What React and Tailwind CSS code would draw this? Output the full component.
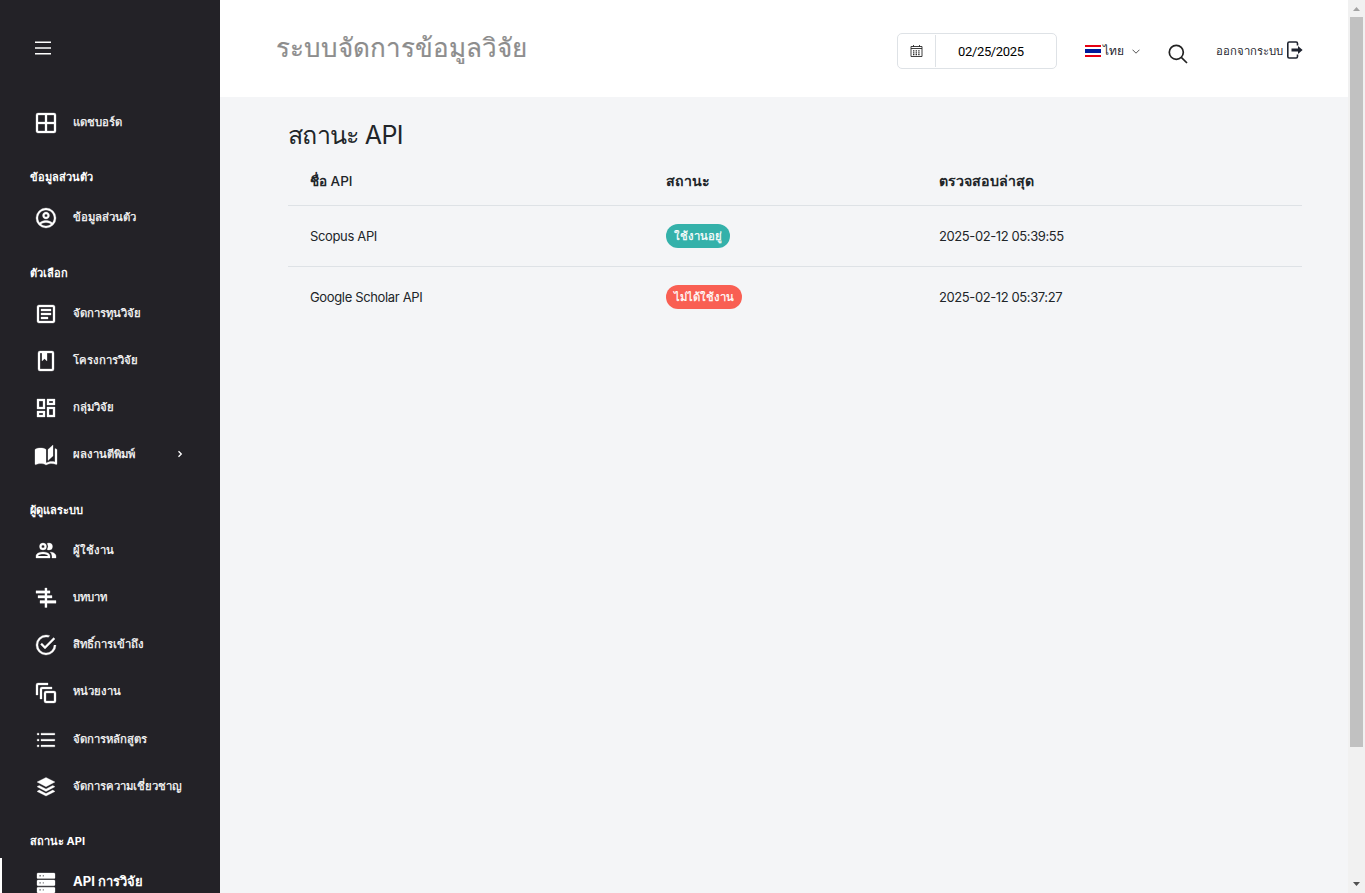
const ICONS = {
  grid: "M4,2H20A2,2 0 0,1 22,4V20A2,2 0 0,1 20,22H4C2.92,22 2,21.1 2,20V4A2,2 0 0,1 4,2M4,4V11H11V4H4M4,20H11V13H4V20M20,20V13H13V20H20M20,4H13V11H20V4Z",
  account:
    "M12,2A10,10 0 0,0 2,12A10,10 0 0,0 12,22A10,10 0 0,0 22,12A10,10 0 0,0 12,2M7.07,18.28C7.5,17.38 10.12,16.5 12,16.5C13.88,16.5 16.5,17.38 16.93,18.28C15.57,19.36 13.86,20 12,20C10.14,20 8.43,19.36 7.07,18.28M18.36,16.83C16.93,15.09 13.46,14.5 12,14.5C10.54,14.5 7.07,15.09 5.64,16.83C4.62,15.5 4,13.82 4,12C4,7.59 7.59,4 12,4C16.41,4 20,7.59 20,12C20,13.82 19.38,15.5 18.36,16.83M12,6C10.06,6 8.5,7.56 8.5,9.5C8.5,11.44 10.06,13 12,13C13.94,13 15.5,11.44 15.5,9.5C15.5,7.56 13.94,6 12,6M12,11A1.5,1.5 0 0,1 10.5,9.5A1.5,1.5 0 0,1 12,8A1.5,1.5 0 0,1 13.5,9.5A1.5,1.5 0 0,1 12,11Z",
  document:
    "M5,3C3.89,3 3,3.89 3,5V19C3,20.11 3.89,21 5,21H19C20.11,21 21,20.11 21,19V5C21,3.89 20.11,3 19,3H5M5,5H19V19H5V5M7,7V9H17V7H7M7,11V13H17V11H7M7,15V17H14V15H7Z",
  book: "M18,2A2,2 0 0,1 20,4V20A2,2 0 0,1 18,22H6A2,2 0 0,1 4,20V4A2,2 0 0,1 6,2H18M18,4H13V12L10.5,9.75L8,12V4H6V20H18V4Z",
  dashboard:
    "M19,5V7H15V5H19M9,5V11H5V5H9M19,13V19H15V13H19M9,17V19H5V17H9M21,3H13V9H21V3M11,3H3V13H11V3M21,11H13V21H21V11M11,15H3V21H11V15Z",
  openBook:
    "M19 2L14 6.5V17.5L19 13V2M6.5 5C4.55 5 2.45 5.4 1 6.5V21.16C1 21.41 1.25 21.66 1.5 21.66C1.6 21.66 1.65 21.59 1.75 21.59C3.1 20.94 5.05 20.5 6.5 20.5C8.45 20.5 10.55 20.9 12 22C13.35 21.15 15.8 20.5 17.5 20.5C19.15 20.5 20.85 20.81 22.25 21.56C22.35 21.61 22.4 21.59 22.5 21.59C22.75 21.59 23 21.34 23 21.09V6.5C22.4 6.05 21.75 5.75 21 5.5V19C19.9 18.65 18.7 18.5 17.5 18.5C15.8 18.5 13.35 19.15 12 20V6.5C10.55 5.4 8.45 5 6.5 5Z",
  people:
    "M13.07 10.41A5 5 0 0 0 13.07 4.59A3.39 3.39 0 0 1 15 4A3.5 3.5 0 0 1 15 11A3.39 3.39 0 0 1 13.07 10.41M5.5 7.5A3.5 3.5 0 1 1 9 11A3.5 3.5 0 0 1 5.5 7.5M7.5 7.5A1.5 1.5 0 1 0 9 6A1.5 1.5 0 0 0 7.5 7.5M16 17V19H2V17S2 13 9 13 16 17 16 17M14 17C13.86 16.22 12.67 15 9 15S4.07 16.31 4 17M15.95 13A5.32 5.32 0 0 1 18 17V19H22V17S22 13.37 15.94 13Z",
  roles: "M2,4.8H10.9V2H13V4.8H16V7.2H13V9.6H18V12.1H13V14.6H22V17.2H13V21.5H10.9V17.2H6V14.6H10.9V12.1H4V9.6H10.9V7.2H2Z",
  check:
    "M20,12A8,8 0 0,1 12,20A8,8 0 0,1 4,12A8,8 0 0,1 12,4C12.76,4 13.5,4.11 14.2,4.31L15.77,2.74C14.61,2.26 13.34,2 12,2A10,10 0 0,0 2,12A10,10 0 0,0 12,22A10,10 0 0,0 22,12M7.91,10.08L6.5,11.5L11,16L21,6L19.59,4.58L11,13.17L7.91,10.08Z",
  stack:
    "M4,2A2,2 0 0,0 2,4V14H4V4H14V2H4M8,6A2,2 0 0,0 6,8V18H8V8H18V6H8M20,12V20H12V12H20M20,10H12A2,2 0 0,0 10,12V20A2,2 0 0,0 12,22H20A2,2 0 0,0 22,20V12A2,2 0 0,0 20,10Z",
  list: "M3.2,5.2H5V6.9H3.2ZM7,5.2H20.8V6.9H7ZM3.2,11.2H5V12.9H3.2ZM7,11.2H20.8V12.9H7ZM3.2,17.1H5V18.8H3.2ZM7,17.1H20.8V18.8H7Z",
  layers:
    "M12,2.5L3,7L12,11.7L21,7L12,2.5M5.2,10.4L3,11.7L12,16.4L21,11.7L18.8,10.4L12,14L5.2,10.4M5.2,15.1L3,16.4L12,21L21,16.4L18.8,15.1L12,18.6L5.2,15.1Z",
  server:
    "M4,2H20A1,1 0 0,1 21,3V7A1,1 0 0,1 20,7.6H4A1,1 0 0,1 3,7V3A1,1 0 0,1 4,2M4,9H20A1,1 0 0,1 21,10V14A1,1 0 0,1 20,14.7H4A1,1 0 0,1 3,14V10A1,1 0 0,1 4,9M4,16.2H20A1,1 0 0,1 21,17V21A1,1 0 0,1 20,22H4A1,1 0 0,1 3,21V17A1,1 0 0,1 4,16.2M8.8,5.5H9.8V4H8.8V5.5M8.8,12.6H9.8V11.2H8.8V12.6M8.8,19.6H9.8V18.2H8.8V19.6M5.4,4V5.5H6.8V4H5.4M5.4,11.2V12.6H6.8V11.2H5.4M5.4,18.2V19.6H6.8V18.2H5.4Z",
};

const SECTIONS = [
  { items: [{ icon: "grid", label: "แดชบอร์ด" }] },
  { title: "ข้อมูลส่วนตัว", items: [{ icon: "account", label: "ข้อมูลส่วนตัว" }] },
  {
    title: "ตัวเลือก",
    items: [
      { icon: "document", label: "จัดการทุนวิจัย" },
      { icon: "book", label: "โครงการวิจัย" },
      { icon: "dashboard", label: "กลุ่มวิจัย" },
      { icon: "openBook", label: "ผลงานตีพิมพ์", expandable: true },
    ],
  },
  {
    title: "ผู้ดูแลระบบ",
    items: [
      { icon: "people", label: "ผู้ใช้งาน" },
      { icon: "roles", label: "บทบาท" },
      { icon: "check", label: "สิทธิ์การเข้าถึง" },
      { icon: "stack", label: "หน่วยงาน" },
      { icon: "list", label: "จัดการหลักสูตร" },
      { icon: "layers", label: "จัดการความเชี่ยวชาญ" },
    ],
  },
  { title: "สถานะ API", items: [{ icon: "server", label: "API การวิจัย", active: true }] },
];

const ROWS = [
  { name: "Scopus API", status: "ใช้งานอยู่", ok: true, checked: "2025-02-12 05:39:55" },
  { name: "Google Scholar API", status: "ไม่ได้ใช้งาน", ok: false, checked: "2025-02-12 05:37:27" },
];

function NavItem({ icon, label, expandable, active }) {
  return (
    <a
      className={
        active
          ? "flex h-[47.2px] shrink-0 items-center border-l-2 border-white pl-8 text-[13px] font-bold text-white"
          : "flex h-[47.2px] shrink-0 items-center pl-[34px] text-[11.3px] text-white [-webkit-text-stroke:0.25px_white]"
      }
    >
      <svg
        viewBox="0 0 24 24"
        className="mt-[1.5px] size-6 shrink-0 fill-white stroke-white stroke-[0.3]"
        fillRule="evenodd"
      >
        <path d={ICONS[icon]} />
      </svg>
      <span className={active ? "ml-[15px] whitespace-nowrap" : "ml-[15px] whitespace-nowrap"}>{label}</span>
      {expandable && (
        <svg viewBox="0 0 6 8" className="mr-[37px] mb-px ml-auto h-2 w-1.5 fill-none stroke-white stroke-[1.3]">
          <path d="M1.5 1.2 4.3 4 1.5 6.8" />
        </svg>
      )}
    </a>
  );
}

function Sidebar() {
  return (
    <aside className="flex w-[220px] shrink-0 flex-col overflow-hidden bg-[#232227]">
      <div className="flex h-[98.4px] shrink-0 pt-[41px] pl-[35px]">
        <svg viewBox="0 0 16 14" className="h-3.5 w-4 fill-white">
          <path d="M0 .4h16v1.5H0zM0 6.2h16v1.5H0zM0 12h16v1.5H0z" />
        </svg>
      </div>
      {SECTIONS.map((section) => (
        <nav key={section.items[0].icon} className="flex shrink-0 flex-col">
          {section.title && (
            <h2 className="flex h-[48.4px] items-center pt-[15px] pl-[30px] text-[11px] font-bold text-white">
              {section.title}
            </h2>
          )}
          {section.items.map((item) => (
            <NavItem key={item.icon} {...item} />
          ))}
        </nav>
      ))}
    </aside>
  );
}

function Header() {
  return (
    <header className="flex h-[97px] shrink-0 items-start bg-white pr-[45px] pl-14">
      <h1 className="mt-[30px] text-[26px] leading-9 tracking-[-0.02px] text-[#8d8d8d] [-webkit-text-stroke:0.2px_#8d8d8d]">
        ระบบจัดการข้อมูลวิจัย
      </h1>
      <div className="mt-[33px] ml-auto flex h-9 w-40 rounded-[5px] border border-[#dee2e6] py-px">
        <div className="flex w-[38px] items-center justify-center border-r border-[#dee2e6]">
          <svg viewBox="0 0 13 12" className="h-3 w-[13px] fill-none stroke-[#2b2b2b]">
            <path strokeWidth="0.9" d="M1 1.500h11v10H1zM1 3.500h11M3.500 0v2M9.500 0v2" />
            <path strokeWidth="1.2" strokeDasharray="1.400 1.200" d="M3 5.800h7M3 7.800h7M3 9.700h7" />
          </svg>
        </div>
        <span className="pl-[22px] font-[Roboto] text-[13px] leading-[34px] tracking-[-0.35px] text-black">
          02/25/2025
        </span>
      </div>
      <div className="mt-[42px] ml-7 flex h-4 items-center text-[12px] text-[#1f1f2e]">
        <svg viewBox="0 0 16 12" className="mt-0.5 h-3 w-4">
          <path fill="#e60012" d="M0 0h16v12H0z" />
          <path fill="#fff" d="M0 2h16v8H0z" />
          <path fill="#001b9a" d="M0 4h16v4H0z" />
        </svg>
        <span className="ml-0.5 w-[23px] pt-0.5 whitespace-nowrap">ไทย</span>
        <svg viewBox="0 0 8 5" className="mt-0.5 ml-1.5 h-[5px] w-2 fill-none stroke-[#555]">
          <path d="M.5.7 4 4.2 7.5.7" />
        </svg>
      </div>
      <svg viewBox="0 0 20 20" className="mt-11 ml-7 size-5 fill-none stroke-[#222] stroke-[1.7]">
        <circle cx="8.3" cy="8.3" r="7" />
        <path d="m13.3 13.3 5.7 5.7" />
      </svg>
      <div className="mt-10 ml-7 flex h-5 items-center text-[11.3px] text-[#1f1f2e]">
        <span className="w-[66px] pt-0.5 whitespace-nowrap">ออกจากระบบ</span>
        <svg viewBox="0 0 16 18" className="ml-[5px] h-[18px] w-4 fill-none stroke-[#1f2430] stroke-[1.6]">
          <path d="M10.500 4.500V2.400A1.400 1.400 0 0 0 9.100 1H2.200A1.400 1.400 0 0 0 .8 2.400V15.600A1.400 1.400 0 0 0 2.200 17H9.100A1.400 1.400 0 0 0 10.500 15.600V13.500" />
          <path className="fill-[#1f2430] stroke-none" d="M4.500 7.600h6.500V5l4.600 4L11 13v-2.600H4.500z" />
        </svg>
      </div>
    </header>
  );
}

function StatusTable() {
  const columns = "grid grid-cols-[356px_273px_1fr] items-center pl-[22px]";
  return (
    <section className="mt-[9px] ml-[68px] w-[1014px] text-[#212529]">
      <h2 className="h-14 pt-[7px] text-[25px] leading-[44px] tracking-[-0.7px]">สถานะ API</h2>
      <div className={`${columns} h-11 border-b border-[#dee2e6] pb-[6px] text-[14.2px] font-bold`}>
        <span className="pt-px text-[13.5px] font-medium">
          <b>ชื่อ</b> API
        </span>
        <span>สถานะ</span>
        <span>ตรวจสอบล่าสุด</span>
      </div>
      {ROWS.map((row) => (
        <div
          key={row.name}
          className={`${columns} h-[61px] border-b border-[#dee2e6] text-[13px] last:h-[60px] last:border-0`}
        >
          <span className="pt-0.5 tracking-[-0.35px]">{row.name}</span>
          <span
            className={
              row.ok
                ? "flex h-6 w-16 items-center justify-center rounded-full bg-[#34b1aa] text-[11.3px] whitespace-nowrap text-white [-webkit-text-stroke:0.25px_white]"
                : "flex h-6 w-[76px] items-center justify-center rounded-full bg-[#f95f53] text-[11.3px] whitespace-nowrap text-white [-webkit-text-stroke:0.25px_white]"
            }
          >
            {row.status}
          </span>
          <span className="pt-0.5 tracking-[-0.4px]">{row.checked}</span>
        </div>
      ))}
    </section>
  );
}

function Scrollbar() {
  return (
    <div className="flex w-[17px] shrink-0 flex-col items-center bg-[#f1f1f1]">
      <svg viewBox="0 0 17 17" className="size-[17px] fill-[#a3a3a3]">
        <path d="M5 11h7L8.500 7z" />
      </svg>
      <div className="h-[730px] w-[13px] bg-[#c1c1c1]" />
      <svg viewBox="0 0 17 17" className="mt-auto size-[17px] fill-[#505050]">
        <path d="M5 6h7l-3.500 4z" />
      </svg>
    </div>
  );
}

export default function App() {
  return (
    <div className="flex h-[893px] w-[1365px] overflow-hidden bg-[#f4f5f7] font-['Inter',sans-serif]">
      <Sidebar />
      <main className="flex min-w-0 flex-1 flex-col">
        <Header />
        <StatusTable />
      </main>
      <Scrollbar />
    </div>
  );
}
